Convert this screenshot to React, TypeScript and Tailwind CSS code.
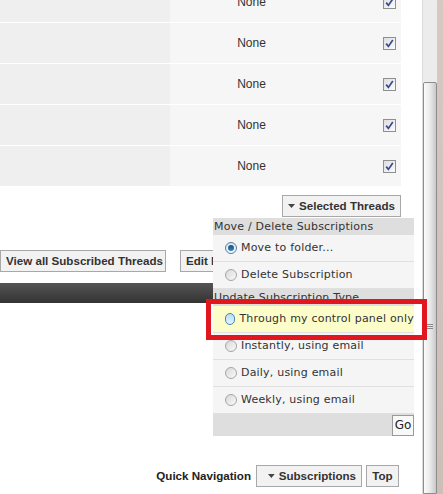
import React from 'react';

const verdana = { fontFamily: '"DejaVu Sans", Verdana, sans-serif' };

function Checkbox() {
  return (
    <div className="w-[13px] h-[13px] border border-[#8f8f8f] bg-gradient-to-br from-[#dedede] to-[#fbfbfb] flex items-center justify-center">
      <svg width="9" height="9" viewBox="0 0 9 9">
        <path d="M1.2 4.6 L3.4 7.4 L7.8 0.9" fill="none" stroke="#3b4a8e" strokeWidth="1.7" />
      </svg>
    </div>
  );
}

function Radio({ state }: { state?: 'checked' | 'hover' }) {
  if (state === 'checked') {
    return (
      <div className="w-[12px] h-[12px] rounded-full border border-[#5a7ea0] bg-gradient-to-b from-[#d6e6f3] to-[#f4f8fb] flex items-center justify-center">
        <div className="w-[6px] h-[6px] rounded-full bg-gradient-to-b from-[#1f4e79] to-[#2f86c3]" />
      </div>
    );
  }
  if (state === 'hover') {
    return <div className="w-[12px] h-[12px] rounded-full border border-[#3f87bf] bg-gradient-to-b from-[#b9dcf4] to-[#e6f3fc]" />;
  }
  return <div className="w-[12px] h-[12px] rounded-full border border-[#a5a5a5] bg-gradient-to-br from-[#d8d8d8] to-[#fafafa]" />;
}

function Arrow() {
  return (
    <svg width="7" height="4" viewBox="0 0 7 4" className="mr-[4px]">
      <path d="M0 0 L7 0 L3.5 4 Z" fill="#444" />
    </svg>
  );
}

function Button({ children, className = '' }: { children: React.ReactNode; className?: string }) {
  return (
    <div className={`h-[22px] flex items-center px-[5px] border border-[#a8a8a8] bg-[#f2f2f2] text-[11.6px] font-bold text-[#333] whitespace-nowrap overflow-hidden ${className}`}>
      {children}
    </div>
  );
}

function MenuItem({ label, state, className = '' }: { label: string; state?: 'checked' | 'hover'; className?: string }) {
  return (
    <div className={`h-[27px] flex items-center pl-[12px] gap-[4px] border-b border-[#e0e0e0] ${className}`}>
      <Radio state={state} />
      <span className="text-[11px] tracking-[0.2px] text-[#333] whitespace-nowrap">{label}</span>
    </div>
  );
}

export default function App() {
  const rows = [0, 1, 2, 3, 4];
  return (
    <div className="w-[443px] h-[494px] overflow-hidden flex bg-white" style={{ fontFamily: '"Liberation Sans", Arial, sans-serif' }}>
      <div className="w-[422px] relative">
        <div className="w-[401px] mt-[-18px]">
          {rows.map((r) => (
            <div key={r} className="flex h-[41px] border-b border-white">
              <div className="w-[170px] bg-[#efefef]" />
              <div className="w-[163px] bg-[#f6f6f6] flex items-center justify-center text-[12px] text-[#333]">None</div>
              <div className="w-[68px] bg-[#f6f6f6] flex items-center pl-[50px]">
                <Checkbox />
              </div>
            </div>
          ))}
        </div>

        <div className="w-[401px] flex justify-end mt-[8px]">
          <Button className="w-[119px]">
            <Arrow />
            Selected Threads
          </Button>
        </div>

        <div className="flex gap-[14px] mt-[33px]">
          <Button className="w-[166px] px-[4px]">View all Subscribed Threads</Button>
          <Button>Edit Folders</Button>
        </div>

        <div className="w-[401px] h-[20px] mt-[11px] bg-gradient-to-b from-[#555] to-[#333]" />

        <div className="w-[401px] flex justify-end items-center gap-[4px] pr-[2px] mt-[162px]">
          <span className="text-[11.6px] font-bold text-[#222] mr-[1px]">Quick Navigation</span>
          <Button className="w-[106px] pl-[11px]">
            <Arrow />
            Subscriptions
          </Button>
          <Button className="w-[33px] justify-center">Top</Button>
        </div>

        {/* popup menu */}
        <div className="absolute left-[213px] top-[218px] w-[201px] bg-[#f5f5f5]" style={verdana}>
          <div className="h-[17px] bg-[#dedede] text-[11px] tracking-[0.2px] text-[#333] pl-[1px] leading-[17px] whitespace-nowrap">Move / Delete Subscriptions</div>
          <MenuItem label="Move to folder..." state="checked" />
          <MenuItem label="Delete Subscription" />
          <div className="h-[17px] bg-[#dedede] text-[11px] tracking-[0.2px] text-[#333] pl-[1px] leading-[17px] whitespace-nowrap">Update Subscription Type</div>
          <MenuItem label="Through my control panel only" state="hover" className="bg-[#fdfdc9]" />
          <MenuItem label="Instantly, using email" />
          <MenuItem label="Daily, using email" />
          <MenuItem label="Weekly, using email" />
          <div className="h-[22px] bg-[#dedede] flex justify-end items-center">
            <div className="w-[22px] h-[21px] border border-[#9a9a9a] bg-[#f8f8f8] text-[12px] text-[#222] flex items-center justify-center">Go</div>
          </div>
        </div>

        {/* red annotation */}
        <div className="absolute left-[206px] top-[299px] w-[221px] h-[41px] border-[5px] border-[#e2161f]" />
      </div>

      {/* window scrollbar */}
      <div className="w-[15px] flex flex-col bg-[#ececec] border-l border-[#dcdcdc]">
        <div className="h-[82px]" />
        <div className="flex-1 rounded-t-[2px] border border-[#8d8d8d] bg-gradient-to-r from-[#fbfbfb] via-[#e9e9e9] to-[#c9c9cc] flex items-start justify-center pt-[241px]">
          <div className="flex flex-col gap-[1px]">
            <div className="w-[6px] h-[1px] bg-[#888]" />
            <div className="w-[6px] h-[1px] bg-[#888]" />
            <div className="w-[6px] h-[1px] bg-[#888]" />
          </div>
        </div>
      </div>
      <div className="w-[6px] bg-gradient-to-b from-[#d6c9c2] to-[#cdbeb6]" />
    </div>
  );
}
